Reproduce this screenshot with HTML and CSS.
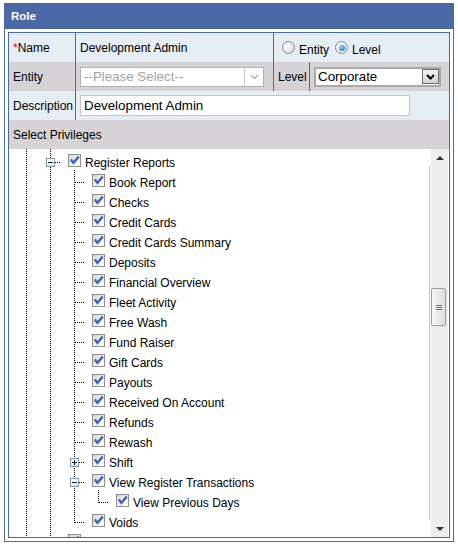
FILE: index.html
```html
<!DOCTYPE html>
<html lang="en">
<head>
  <meta charset="UTF-8">
  <title>Role</title>
  <link rel="stylesheet" href="styles.css">
</head>
<body>

  <div class="panel">
    <div class="panel-title">Role</div>
    <div class="panel-body">
      <div class="inner">

        <div class="form">
          <div class="cell first row-a"><span class="req">*</span>Name</div>
          <div class="cell row-a">Development Admin</div>
          <div class="cell row-a span-2 radios">
            <span class="radio"></span><span class="radio-text">Entity</span>
            <span class="radio checked"></span><span class="radio-text">Level</span>
          </div>

          <div class="cell first row-b">Entity</div>
          <div class="cell row-b">
            <div class="select select-off">
              <span class="select-text">--Please Select--</span>
              <span class="select-btn">
                <svg width="9" height="6" viewBox="0 0 9 6"><polyline points="1,1 4.5,4.5 8,1" fill="none" stroke="#9fb1c6" stroke-width="1.3"/></svg>
              </span>
            </div>
          </div>
          <div class="cell row-b">Level</div>
          <div class="cell row-b">
            <div class="select select-on">
              <span class="select-text">Corporate</span>
              <span class="select-btn">
                <svg width="9" height="6" viewBox="0 0 9 6"><polyline points="1,1 4.5,4.5 8,1" fill="none" stroke="#000" stroke-width="2"/></svg>
              </span>
            </div>
          </div>

          <div class="cell first row-a">Description</div>
          <div class="cell row-a span-3">
            <input class="text-input" type="text" value="Development Admin">
          </div>

          <div class="cell first row-b span-4">Select Privileges</div>
        </div>

        <div class="tree-area">
          <div class="tree" id="tree"></div>
          <div class="scrollbar">
            <div class="sb-btn"><span class="arrow-up"></span></div>
            <div class="sb-track">
              <div class="sb-thumb"><span></span><span></span><span></span></div>
            </div>
            <div class="sb-btn"><span class="arrow-down"></span></div>
          </div>
        </div>

      </div>
    </div>
  </div>

  <script>
    const nodes = [
      { text: 'Register Reports', level: 1, exp: 'minus' },
      { text: 'Book Report', level: 2 },
      { text: 'Checks', level: 2 },
      { text: 'Credit Cards', level: 2 },
      { text: 'Credit Cards Summary', level: 2 },
      { text: 'Deposits', level: 2 },
      { text: 'Financial Overview', level: 2 },
      { text: 'Fleet Activity', level: 2 },
      { text: 'Free Wash', level: 2 },
      { text: 'Fund Raiser', level: 2 },
      { text: 'Gift Cards', level: 2 },
      { text: 'Payouts', level: 2 },
      { text: 'Received On Account', level: 2 },
      { text: 'Refunds', level: 2 },
      { text: 'Rewash', level: 2 },
      { text: 'Shift', level: 2, exp: 'plus' },
      { text: 'View Register Transactions', level: 2, exp: 'minus' },
      { text: 'View Previous Days', level: 3, last: true, pipes: [2] },
      { text: 'Voids', level: 2, last: true },
      { text: '', level: 1, exp: 'plus' }
    ];

    const tree = document.getElementById('tree');
    const tick = '<svg width="11" height="11" viewBox="0 0 11 11"><path d="M1.8 4.6 L4.4 7.8 L9.8 1.6" fill="none" stroke="#4463b4" stroke-width="2.4"/></svg>';

    // Render tree rows
    nodes.forEach(node => {
      const row = document.createElement('div');
      row.className = 'node';
      for (let i = 0; i < node.level; i++) {
        const cell = document.createElement('span');
        cell.className = node.pipes && node.pipes.includes(i) ? 'indent pipe' : 'indent';
        row.appendChild(cell);
      }
      const conn = document.createElement('span');
      conn.className = 'conn' + (node.last ? ' last' : '') + (node.level < 2 ? ' flat' : '');
      if (node.exp) {
        conn.innerHTML = `<span class="exp ${node.exp}"></span>`;
      }
      row.appendChild(conn);
      row.insertAdjacentHTML('beforeend', `<span class="check">${tick}</span><span class="node-text">${node.text}</span>`);
      tree.appendChild(row);
    });
  </script>

</body>
</html>
```

FILE: styles.css
```css
* {
  box-sizing: border-box;
}

body {
  margin: 3px 4px;
  font-family: "Liberation Sans", Arial, sans-serif;
  font-size: 12px;
  color: #000;
  background: #fff;
}

.panel {
  width: 450px;
  height: 539px;
  border: 1px solid #4a69a6;
}

.panel-title {
  height: 25px;
  line-height: 25px;
  padding-left: 6px;
  background: #4a69a6;
  color: #fff;
  font-size: 11.5px;
  font-weight: bold;
}

.panel-body {
  padding: 3px;
}

.inner {
  border: 1px solid #4a69a6;
}

/* Form rows */
.form {
  display: grid;
  grid-template-columns: 66px 198px 36px 140px;
  grid-auto-rows: 29px;
}

.cell {
  display: flex;
  align-items: center;
  padding-left: 4px;
  border-left: 1px solid #4a69a6;
  white-space: nowrap;
}

.cell.first {
  border-left: none;
}

.row-a {
  background: #e5edf5;
}

.row-b {
  background: #d6d3d6;
}

.span-2 {
  grid-column: span 2;
}

.span-3 {
  grid-column: span 3;
}

.span-4 {
  grid-column: span 4;
}

.req {
  color: #e00000;
}

.radio {
  position: relative;
  width: 13px;
  height: 13px;
  margin-left: 4px;
  border: 1px solid #8c8c8c;
  border-radius: 50%;
  background: radial-gradient(circle at 35% 35%, #fff 0%, #e8e8e8 55%, #cdcdcd 100%);
  flex: none;
}

.radio.checked::after {
  content: '';
  position: absolute;
  left: 2.5px;
  top: 2.5px;
  width: 6px;
  height: 6px;
  border-radius: 50%;
  background: radial-gradient(circle at 40% 35%, #8fd6ff, #1b8ad6 70%);
}

.radio-text {
  margin: 4px 2px 0 4px;
}

.select {
  display: flex;
  align-items: center;
  height: 20px;
  background: #fff;
  font-size: 13.33px;
}

.select-text {
  flex: 1;
  padding-left: 3px;
}

.select-btn {
  display: flex;
  align-items: center;
  justify-content: center;
}

.select-off {
  width: 184px;
  border: 1px solid #b2b2b2;
  color: #a3a3a3;
}

.select-off .select-btn {
  width: 19px;
  height: 100%;
  border-left: 1px solid #c6c6c6;
}

.select-on {
  width: 127px;
  border: 2px solid #a9a9a9;
}

.select-on .select-text {
  padding-left: 2px;
}

.select-on .select-btn {
  width: 17px;
  height: 15px;
  border: 1px solid #6c6c6c;
  background: linear-gradient(#f2f2f2, #d4d4d4);
}

.text-input {
  width: 330px;
  height: 21px;
  padding: 0 3px;
  border: 1px solid #c4c4c4;
  font-family: "Liberation Sans", Arial, sans-serif;
  font-size: 13.33px;
  color: #000;
  outline: none;
}

/* Privileges tree */
.tree-area {
  display: flex;
  height: 388px;
  background: #fff;
}

.tree {
  width: 420px;
  height: 100%;
  overflow: hidden;
  padding: 1px 0 0 5px;
  background:
    linear-gradient(#000 50%, transparent 50%) 17px 0 / 1px 2px repeat-y,
    linear-gradient(#000 50%, transparent 50%) 41px 0 / 1px 2px repeat-y;
}

.node {
  display: flex;
  align-items: flex-start;
  height: 20px;
}

.indent,
.conn {
  position: relative;
  width: 24px;
  height: 20px;
  flex: none;
}

.pipe::before,
.conn::before {
  content: '';
  position: absolute;
  left: 12px;
  top: 0;
  width: 1px;
  height: 20px;
  background: linear-gradient(#000 50%, transparent 50%) 0 0 / 1px 2px;
}

.conn.last::before {
  height: 13px;
}

.conn.flat::before {
  display: none;
}

.conn::after {
  content: '';
  position: absolute;
  left: 13px;
  top: 12px;
  width: 9px;
  height: 1px;
  background: linear-gradient(to right, #000 50%, transparent 50%) 0 0 / 2px 1px;
}

.exp {
  position: absolute;
  left: 8px;
  top: 8px;
  z-index: 1;
  width: 9px;
  height: 9px;
  border: 1px solid #8298b8;
  background: linear-gradient(#fff, #dfe5ee);
}

.exp::before {
  content: '';
  position: absolute;
  left: 1px;
  top: 3px;
  width: 5px;
  height: 1px;
  background: #1a1a1a;
}

.exp.plus::after {
  content: '';
  position: absolute;
  left: 3px;
  top: 1px;
  width: 1px;
  height: 5px;
  background: #1a1a1a;
}

.check {
  display: block;
  width: 13px;
  height: 13px;
  margin: 4px 0 0 6px;
  border: 1px solid #8e8f8f;
  background: linear-gradient(135deg, #d6d6d6 0%, #f2f2f2 60%, #fff 100%);
  flex: none;
}

.check svg {
  display: block;
}

.node-text {
  margin: 6px 0 0 4px;
  line-height: 14px;
  white-space: nowrap;
}

/* Fake scrollbar */
.scrollbar {
  display: flex;
  flex-direction: column;
  width: 19px;
  margin-right: 1px;
}

.sb-btn {
  display: flex;
  align-items: center;
  justify-content: center;
  height: 17px;
  margin-left: 2px;
  background: #eeeeee;
}

.sb-track {
  flex: 1;
  border-left: 1px solid #c6c6c6;
  background: linear-gradient(to right, #fff 1px, #ededed 1px);
}

.sb-thumb {
  display: flex;
  flex-direction: column;
  align-items: center;
  justify-content: center;
  gap: 1px;
  width: 15px;
  height: 38px;
  margin: 122px 0 0 1px;
  border: 1px solid #9c9c9c;
  border-radius: 2px;
  background: linear-gradient(to right, #f6f6f6, #dedede);
}

.sb-thumb span {
  width: 6px;
  height: 1px;
  background: #6f6f6f;
}

.arrow-up,
.arrow-down {
  width: 0;
  height: 0;
  border-left: 4px solid transparent;
  border-right: 4px solid transparent;
}

.arrow-up {
  border-bottom: 4px solid #333;
}

.arrow-down {
  border-top: 4px solid #333;
}
```
